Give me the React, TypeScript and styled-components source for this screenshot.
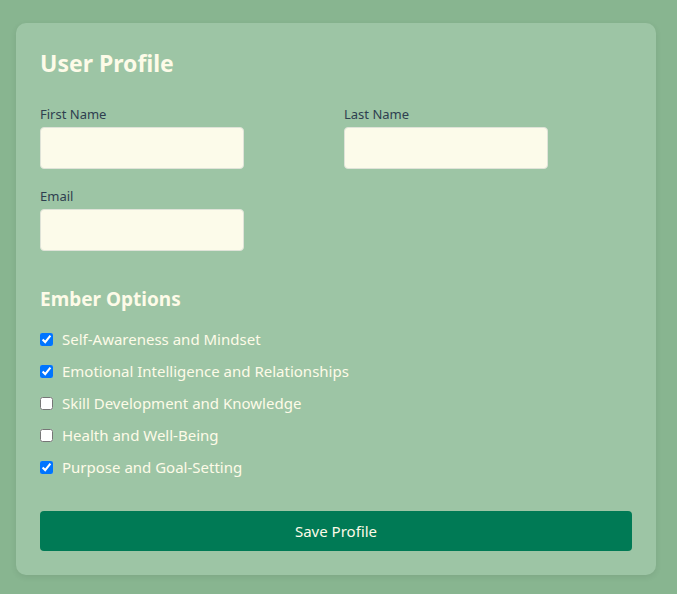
import React from "react";
import styled, { createGlobalStyle } from "styled-components";

const Global = createGlobalStyle`
  html, body { margin: 0; padding: 0; }
  body {
    background: #88b590;
    font-family: "Noto Sans", "Open Sans", sans-serif;
  }
`;

const Page = styled.div`
  padding: 23px 21px 19px 16px;
`;

const Card = styled.form`
  width: 640px;
  box-sizing: border-box;
  background: #9dc5a5;
  border-radius: 10px;
  padding: 24px;
  box-shadow: 0 2px 6px rgba(0, 0, 0, 0.08);
`;

const Title = styled.h2`
  margin: 2px 0 28px;
  font-size: 23px;
  line-height: 28px;
  font-weight: 700;
  color: #fdfbe8;
`;

const Grid = styled.div`
  display: grid;
  grid-template-columns: 1fr 1fr;
  column-gap: 16px;
  row-gap: 18px;
`;

const Field = styled.div`
  display: flex;
  flex-direction: column;
  gap: 4px;
`;

const Label = styled.label`
  font-size: 13px;
  line-height: 18px;
  color: #2f4050;
`;

const Input = styled.input`
  width: 204px;
  height: 42px;
  box-sizing: border-box;
  border: 1px solid #dfe3d8;
  border-radius: 4px;
  background: #fcfbea;
  padding: 8px;
  font: inherit;
`;

const Section = styled.h3`
  margin: 36px 0 17px;
  font-size: 19px;
  line-height: 24px;
  font-weight: 700;
  color: #fdfbe8;
`;

const Options = styled.div`
  display: flex;
  flex-direction: column;
  gap: 10px;
`;

const Option = styled.label`
  display: flex;
  align-items: center;
  height: 22px;
  gap: 9px;
  font-size: 15px;
  color: #fdfbe8;
`;

const Check = styled.input`
  margin: 0;
  width: 13px;
  height: 13px;
`;

const Button = styled.button`
  margin-top: 33px;
  width: 100%;
  height: 40px;
  border: none;
  border-radius: 4px;
  background: #007a55;
  color: #fdfbe8;
  font: inherit;
  font-size: 15px;
`;

const options: [string, boolean][] = [
  ["Self-Awareness and Mindset", true],
  ["Emotional Intelligence and Relationships", true],
  ["Skill Development and Knowledge", false],
  ["Health and Well-Being", false],
  ["Purpose and Goal-Setting", true],
];

export default function App() {
  return (
    <Page>
      <Global />
      <Card onSubmit={(e) => e.preventDefault()}>
        <Title>User Profile</Title>
        <Grid>
          <Field>
            <Label>First Name</Label>
            <Input type="text" />
          </Field>
          <Field>
            <Label>Last Name</Label>
            <Input type="text" />
          </Field>
          <Field>
            <Label>Email</Label>
            <Input type="email" />
          </Field>
        </Grid>
        <Section>Ember Options</Section>
        <Options>
          {options.map(([t, c]) => (
            <Option key={t}>
              <Check type="checkbox" defaultChecked={c} />
              {t}
            </Option>
          ))}
        </Options>
        <Button type="submit">Save Profile</Button>
      </Card>
    </Page>
  );
}
